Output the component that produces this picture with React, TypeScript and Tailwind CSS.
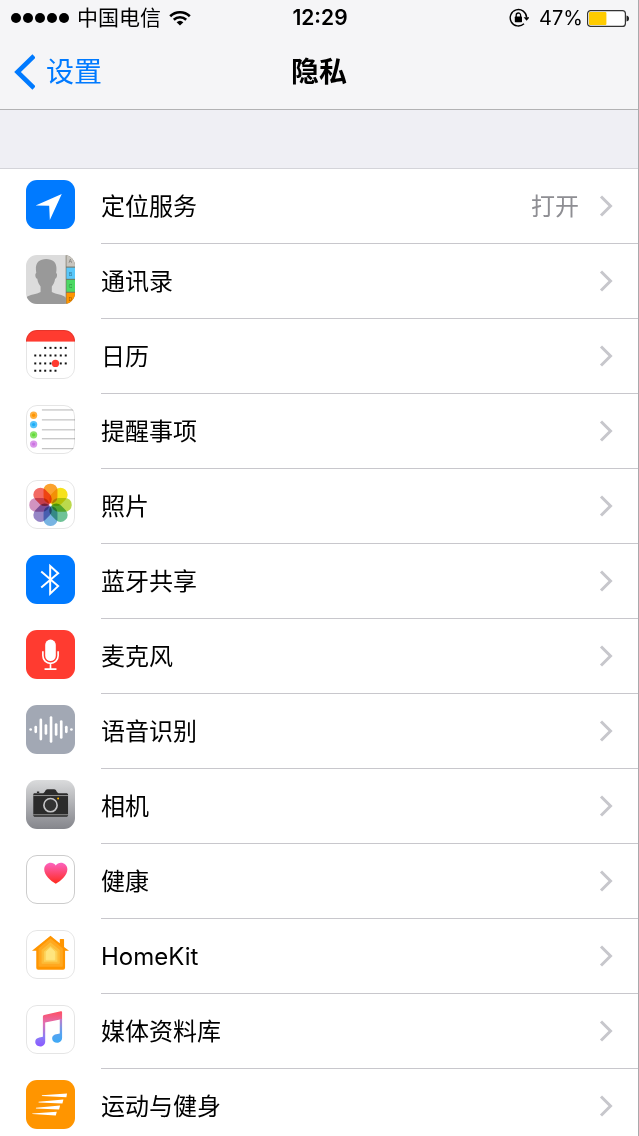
import type { ReactNode } from 'react'

interface PrivacyItem {
  id: string
  label: string
  value?: string
  tile: string
  icon: ReactNode
}

const calendarRows = [
  { y: 54, xs: [58, 74, 89, 105, 120] },
  { y: 77, xs: [28, 43, 58, 74, 89, 105, 120] },
  { y: 101, xs: [28, 43, 58, 74, 105, 120] },
  { y: 123, xs: [28, 43, 58, 74, 89] },
]

const reminderDots = [
  { y: 31, color: '#ff9500' },
  { y: 59, color: '#1badf8' },
  { y: 90, color: '#63da38' },
  { y: 118, color: '#cc73e1' },
]

const petals = ['#fba22e', '#f6e21c', '#bbd94c', '#6fc297', '#78b4e2', '#9686c6', '#d193c0', '#f26a63']

const contactTabs = [
  { y: 0, h: 35, letter: 'A', color: '#c8c5bf' },
  { y: 38, h: 34, letter: 'B', color: '#5ac8fa' },
  { y: 75, h: 36, letter: 'C', color: '#4cd964' },
  { y: 114, h: 34, letter: 'D', color: '#ff9500' },
]

const voiceBars = [4, 11, 33, 16, 40, 19, 28, 11, 4]

const items: PrivacyItem[] = [
  {
    id: 'location',
    label: '定位服务',
    value: '打开',
    tile: 'bg-[#007aff]',
    icon: <path d="M29 77L108 42L72 121L70 78Z" fill="#fff" />,
  },
  {
    id: 'contacts',
    label: '通讯录',
    tile: 'bg-[#dcdcdc]',
    icon: (
      <>
        <path
          d="M61 12C80 12 94 22 92 45L91 54C96 56 94 70 88 72C86 84 82 90 78 95V112C90 119 112 119 120 129V148H0V129C10 119 32 119 44 112V95C40 90 36 84 34 72C28 70 26 56 31 54L30 45C28 22 42 12 61 12Z"
          fill="#999"
        />
        <path d="M120 0H148V148H120Z" fill="#75705f" />
        {contactTabs.map((t) => (
          <g key={t.letter}>
            <rect x="122" y={t.y} width="26" height={t.h} fill={t.color} />
            <text x="134" y={t.y + 25} fontSize="16" textAnchor="middle" fill="#000" opacity="0.4">
              {t.letter}
            </text>
          </g>
        ))}
      </>
    ),
  },
  {
    id: 'calendar',
    label: '日历',
    tile: 'bg-white outline -outline-offset-1 outline-black/10',
    icon: (
      <>
        <rect width="148" height="35" fill="#ff3b30" />
        {calendarRows.map((row) =>
          row.xs.map((x) => (
            <rect key={`${x}-${row.y}`} x={x - 3} y={row.y - 3} width="6" height="6" fill="#111" />
          )),
        )}
        <circle cx="89" cy="101" r="11" fill="#ff3b30" />
      </>
    ),
  },
  {
    id: 'reminders',
    label: '提醒事项',
    tile: 'bg-white outline -outline-offset-1 outline-black/10',
    icon: (
      <>
        {reminderDots.map((d) => (
          <g key={d.y}>
            <circle cx="23" cy={d.y} r="11" fill={d.color} opacity="0.75" />
            <circle cx="23" cy={d.y} r="5" fill={d.color} />
          </g>
        ))}
        <path d="M48 15H148M48 45H148M48 75H148M48 102H148M48 132H148" stroke="#b4b4b4" strokeWidth="3" />
      </>
    ),
  },
  {
    id: 'photos',
    label: '照片',
    tile: 'bg-white outline -outline-offset-1 outline-black/10',
    icon: (
      <g className="isolate">
        {petals.map((color, i) => (
          <rect
            key={color}
            className="mix-blend-multiply"
            x="-21"
            y="-64"
            width="42"
            height="60"
            rx="20"
            fill={color}
            transform={`translate(74 75) rotate(${i * 45})`}
          />
        ))}
      </g>
    ),
  },
  {
    id: 'bluetooth',
    label: '蓝牙共享',
    tile: 'bg-[#007aff]',
    icon: <path d="M46 50L97 94L73 117V33L97 55L46 98" fill="none" stroke="#fff" strokeWidth="6" />,
  },
  {
    id: 'microphone',
    label: '麦克风',
    tile: 'bg-[#ff3b30]',
    icon: (
      <>
        <rect x="58" y="29" width="32" height="65" rx="16" fill="#fff" />
        <path d="M51 64V78A23 23 0 0 0 97 78V64M74 101V118M56 118H92" fill="none" stroke="#fff" strokeWidth="5" />
      </>
    ),
  },
  {
    id: 'speech',
    label: '语音识别',
    tile: 'bg-[#a2a8b4]',
    icon: (
      <>
        {voiceBars.map((h, i) => (
          <rect key={i} x={10 + i * 15.4} y={74 - h} width="8" height={h * 2} rx="4" fill="#fff" />
        ))}
      </>
    ),
  },
  {
    id: 'camera',
    label: '相机',
    tile: 'bg-linear-to-b from-[#dadbdc] to-[#85868c]',
    icon: (
      <>
        <path d="M22 43L24 40H52C58 38 58 28 65 28H85C92 28 92 38 98 40H124L127 43V108L124 111H25L22 108Z" fill="#2b2b2b" />
        <path d="M33 37H40" stroke="#2b2b2b" strokeWidth="4" />
        <path d="M22 47H127M22 105H127" stroke="#c9c9c9" strokeWidth="2" />
        <circle cx="74" cy="76" r="24" fill="#2b2b2b" />
        <circle cx="74" cy="76" r="20" fill="#333" stroke="#c4c4c6" strokeWidth="5" />
        <circle cx="97" cy="56" r="3" fill="#ffb800" />
      </>
    ),
  },
  {
    id: 'health',
    label: '健康',
    tile: 'bg-white outline -outline-offset-1 outline-black/20',
    icon: (
      <>
        <linearGradient id="heart" x1="0" y1="0" x2="0" y2="1">
          <stop offset="0" stopColor="#fc62c0" />
          <stop offset="1" stopColor="#ff2a1c" />
        </linearGradient>
        <path
          d="M90 87C75 78 55 62 55 43C55 23 81 16 90 32C99 16 125 23 125 43C125 62 105 78 90 87Z"
          fill="url(#heart)"
        />
      </>
    ),
  },
  {
    id: 'homekit',
    label: 'HomeKit',
    tile: 'bg-white outline -outline-offset-1 outline-black/10',
    icon: (
      <>
        <path
          d="M74 17L102 40V29Q102 27 104 27H113Q115 27 115 29V51L130 63H118V114Q118 120 112 120H37Q31 120 31 114V63H18Z"
          fill="#ff9500"
        />
        <path d="M74 28L109 57V109H40V57Z" fill="#ffa820" stroke="#ffa820" strokeWidth="4" strokeLinejoin="round" />
        <path d="M74 40L100 61V100H49V61Z" fill="#fdbc38" stroke="#fdbc38" strokeWidth="4" strokeLinejoin="round" />
        <path d="M74 48L95 65V96H54V65Z" fill="#fdd055" />
        <path d="M74 54L87 66V90H61V66Z" fill="#ffe57e" stroke="#ffe57e" strokeWidth="3" strokeLinejoin="round" />
      </>
    ),
  },
  {
    id: 'media',
    label: '媒体资料库',
    tile: 'bg-white outline -outline-offset-1 outline-black/10',
    icon: (
      <>
        <linearGradient id="note" gradientUnits="userSpaceOnUse" x1="80" y1="20" x2="80" y2="122">
          <stop offset="0" stopColor="#ff4f63" />
          <stop offset="0.35" stopColor="#e070b4" />
          <stop offset="0.75" stopColor="#8a7cf6" />
          <stop offset="1" stopColor="#8a5cff" />
        </linearGradient>
        <linearGradient id="noteBlue" gradientUnits="userSpaceOnUse" x1="100" y1="40" x2="100" y2="112">
          <stop offset="0" stopColor="#c77bc8" />
          <stop offset="0.6" stopColor="#5aa2f0" />
          <stop offset="1" stopColor="#3fa9f5" />
        </linearGradient>
        <path
          d="M51 35Q51 31 55 30L105 19Q109 18 109 22V44L103 44L58 53V110C58 120 50 125 43 125C35 125 28 120 28 112C28 98 43 98 51 96Z"
          fill="url(#note)"
        />
        <path d="M102 42H109V99C109 109 101 114 94 114C85 114 79 108 79 101C79 88 94 88 102 86Z" fill="url(#noteBlue)" />
      </>
    ),
  },
  {
    id: 'motion',
    label: '运动与健身',
    tile: 'bg-[#ff9500]',
    icon: (
      <path
        d="M48 46L124 41L122 52L48 48ZM38 66L113 59L110 71L38 68ZM30 84L103 77L100 89L30 86ZM19 101L93 96L90 107L19 103Z"
        fill="#fff"
      />
    ),
  },
]

function StatusBar() {
  return (
    <div className="grid h-9 grid-cols-[1fr_auto_1fr] items-center pr-[9px] pl-[11px] text-[21px] leading-9">
      <div className="flex items-center gap-2">
        <div className="flex gap-0.5">
          {[0, 1, 2, 3, 4].map((n) => (
            <span key={n} className="size-2.5 rounded-full bg-black" />
          ))}
        </div>
        <span>中国电信</span>
        <svg className="h-4 w-[22px]" viewBox="0 0 22 16" fill="none" stroke="#000" strokeWidth="2.6">
          <path d="M1.2 6.2A14 14 0 0 1 20.8 6.2M4.8 9.7A9 9 0 0 1 17.2 9.7" />
          <path d="M11 15.6L7.6 12.3A5 5 0 0 1 14.4 12.3Z" fill="#000" stroke="none" />
        </svg>
      </div>
      <span className="font-semibold">12:29</span>
      <div className="flex items-center justify-end">
        <svg className="mr-2.5 size-5" viewBox="0 0 20 20" fill="none" stroke="#000">
          <path d="M17.6 9.5A8.2 8.2 0 1 0 15 15.8" strokeWidth="1.4" />
          <path d="M14.6 9.2H20.6L17.6 12.8Z" fill="#000" stroke="none" />
          <rect x="5.8" y="8.6" width="7.2" height="5.6" rx="0.6" fill="#000" stroke="none" />
          <path d="M7.2 9V7.2A2.2 2.2 0 0 1 11.6 7.2V9" strokeWidth="1.3" />
        </svg>
        <span className="text-xl">47%</span>
        <svg className="ml-1 h-[17px] w-[42px]" viewBox="0 0 42 17">
          <rect x="0.6" y="0.6" width="37.8" height="15.8" rx="3" fill="#fff" stroke="#333" strokeWidth="1.2" />
          <rect x="2" y="2" width="17.4" height="13" rx="1" fill="#ffcc00" />
          <path d="M39.5 5.5C41.5 6 42 7 42 8.5C42 10 41.5 11 39.5 11.5Z" fill="#222" />
        </svg>
      </div>
    </div>
  )
}

function PrivacyRow({ item }: { item: PrivacyItem }) {
  return (
    <li>
      <a href={`#${item.id}`} className="flex h-[75px] pl-[26px] active:bg-gray-200">
        <span className={`mt-[11px] size-[49px] shrink-0 overflow-hidden rounded-[11px] ${item.tile}`}>
          <svg className="size-full" viewBox="0 0 148 148" aria-hidden="true">
            {item.icon}
          </svg>
        </span>
        <span className="ml-[26px] flex flex-1 items-center border-b border-[#c8c7cc] pr-[25px]">
          <span className="flex-1 pt-0.5">{item.label}</span>
          {item.value && <span className="mr-5 pt-0.5 text-[#8e8e93]">{item.value}</span>}
          <svg className="h-[22px] w-3.5" viewBox="0 0 14 22" fill="none" stroke="#c7c7cc" strokeWidth="3" aria-hidden="true">
            <path d="M2 1.5L11.5 11L2 20.5" />
          </svg>
        </span>
      </a>
    </li>
  )
}

export default function App() {
  return (
    <div className="flex h-screen flex-col border-r border-[#a9a9ac] bg-[#efeff4] font-['Inter','Noto_Sans_CJK_SC',sans-serif] text-black">
      <header className="shrink-0 border-b border-[#b2b2b4] bg-[#f5f5f7]">
        <StatusBar />
        <nav className="grid h-[73px] grid-cols-[1fr_auto_1fr] items-center px-[13px] pb-0.5 text-[28px] leading-9">
          <a href="#settings" className="flex items-center gap-[11px] text-[#007aff]">
            <svg className="h-9 w-[22px]" viewBox="0 0 22 36" fill="none" stroke="currentColor" strokeWidth="4.6" aria-hidden="true">
              <path d="M21 2L4.5 18L21 34" />
            </svg>
            设置
          </a>
          <h1 className="font-semibold">隐私</h1>
        </nav>
      </header>

      <main className="min-h-0 flex-1 overflow-y-auto [scrollbar-width:none]">
        <div className="h-[59px] border-b border-[#d4d4d9]" />
        <ul className="bg-white text-2xl">
          {items.map((item) => (
            <PrivacyRow key={item.id} item={item} />
          ))}
        </ul>
      </main>
    </div>
  )
}
